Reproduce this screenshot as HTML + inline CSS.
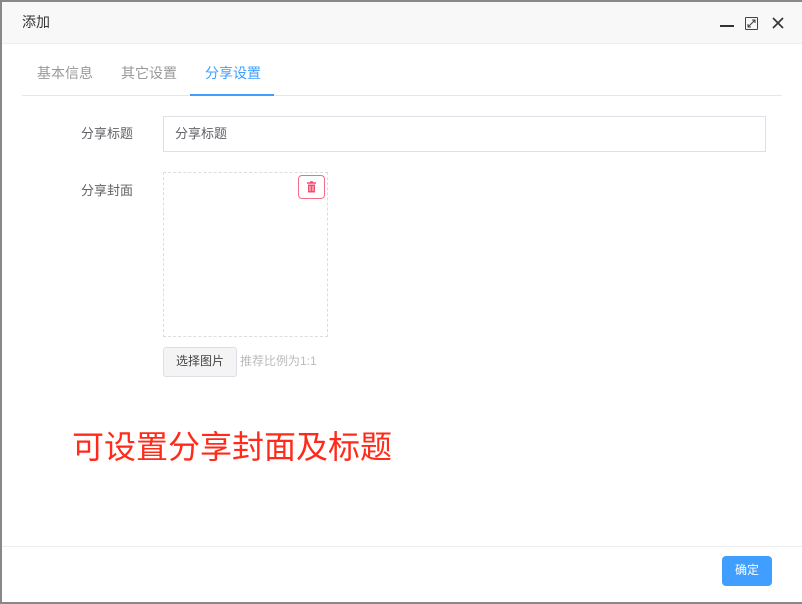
<!DOCTYPE html>
<html><head><meta charset="utf-8"><style>
*{margin:0;padding:0;box-sizing:border-box}
body{width:802px;height:604px;background:#888;font-family:"Liberation Sans","Noto Sans CJK SC",sans-serif;position:relative;overflow:hidden}
.dlg{position:absolute;left:2px;top:2px;width:800px;height:600px;background:#fff}
.hd{height:42px;background:#f8f8f8;border-bottom:1px solid #eee;position:relative}
.hd .t{position:absolute;left:20px;top:10px;font-size:14px;color:#333}
.abs{position:absolute}
.tab{position:absolute;top:61px;font-size:14px;color:#999}
.lbl{position:absolute;font-size:13px;color:#606266}
</style></head><body>
<div class="dlg">
<div class="hd"><div class="t">添加</div>
<div class="abs" style="left:718px;top:23px;width:14px;height:2px;background:#333"></div>
<div class="abs" style="left:743px;top:15px;width:13px;height:13px;border:1.5px solid #444;border-radius:1px"></div>
<svg class="abs" style="left:745px;top:17px" width="9" height="9"><path d="M1 8L8 1M5 1h3v3M1 5v3h3" stroke="#444" stroke-width="1.1" fill="none"/></svg>
<svg class="abs" style="left:770px;top:15px" width="12" height="12"><path d="M1 1L11 11M11 1L1 11" stroke="#333" stroke-width="1.6"/></svg>
</div>
<div class="tab" style="left:35px">基本信息</div>
<div class="tab" style="left:119px">其它设置</div>
<div class="tab" style="left:203px;color:#409eff">分享设置</div>
<div class="abs" style="left:20px;top:93px;width:760px;height:1px;background:#e4e7ed"></div>
<div class="abs" style="left:188px;top:92px;width:84px;height:2px;background:#409eff"></div>
<div class="lbl" style="left:79px;top:121px">分享标题</div>
<div class="abs" style="left:161px;top:114px;width:603px;height:36px;border:1px solid #dcdfe6;font-size:13px;color:#606266;padding:6px 11px">分享标题</div>
<div class="lbl" style="left:79px;top:178px">分享封面</div>
<div class="abs" style="left:161px;top:170px;width:165px;height:165px;border:1px dashed #ddd"></div>
<div class="abs" style="left:296px;top:173px;width:27px;height:24px;border:1px solid #f56c8a;border-radius:4px"></div>
<svg class="abs" style="left:304px;top:179px" width="11" height="12"><path d="M1 2h9M4 1h3" stroke="#f0506e" stroke-width="1.4"/><rect x="2" y="3.5" width="7" height="8" fill="#f0506e"/><path d="M4 5v5M7 5v5" stroke="#fff" stroke-width=".8"/></svg>
<div class="abs" style="left:161px;top:345px;width:74px;height:30px;border:1px solid #dcdfe6;border-radius:3px;background:#f4f4f5;font-size:12px;color:#444;text-align:center;line-height:27px">选择图片</div>
<div class="abs" style="left:238px;top:350px;font-size:12px;color:#bbb">推荐比例为1:1</div>
<div class="abs" style="left:70px;top:425px;font-size:32px;color:#ff2a1a;line-height:40px">可设置分享封面及标题</div>
<div class="abs" style="left:0;top:544px;width:800px;height:1px;background:#eee"></div>
<div class="abs" style="left:720px;top:554px;width:50px;height:30px;background:#409eff;border-radius:4px;color:#fff;font-size:12px;text-align:center;line-height:29px">确定</div>
</div>
</body></html>
